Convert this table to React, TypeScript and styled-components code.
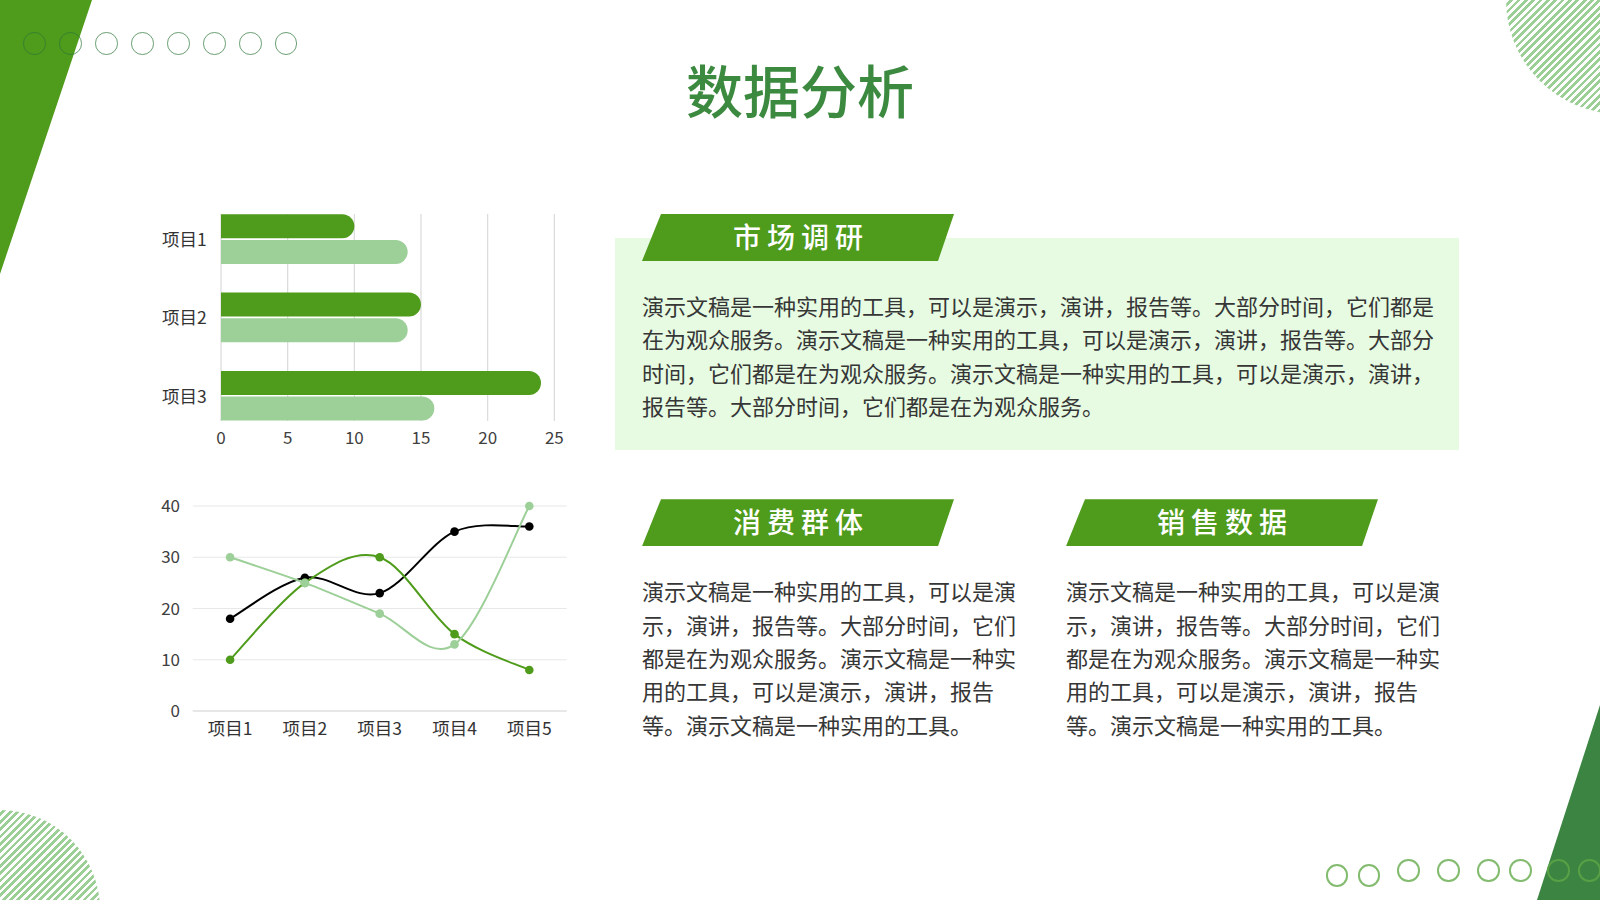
import React from "react";
import styled, { createGlobalStyle } from "styled-components";

const GREEN = "#4f9b1b";
const LIGHT = "#9dcf98";
const DEEP = "#3b8a3f";
const FONT = `"Noto Sans CJK SC", "Noto Sans", sans-serif`;

const GlobalStyle = createGlobalStyle`
  html, body {
    margin: 0;
    padding: 0;
    background: #fff;
  }
  body {
    font-family: ${FONT};
  }
`;

const Page = styled.div`
  position: relative;
  width: 1600px;
  height: 900px;
  overflow: hidden;
  background: #fff;
  display: flex;
  flex-direction: column;
`;

/* ---------- decorations ---------- */

const CornerWedge = styled.div<{ $side: "left" | "right" }>`
  position: absolute;
  ${(p) =>
    p.$side === "left"
      ? `left: 0; top: 0; width: 92px; height: 274px; background: ${GREEN};
         clip-path: polygon(0 0, 100% 0, 0 100%);`
      : `right: 0; bottom: 0; width: 63px; height: 195px; background: #3b8441;
         clip-path: polygon(100% 0, 100% 100%, 0 100%);`}
`;

const StripedDisc = styled.div<{ $x: number; $y: number; $size: number }>`
  position: absolute;
  left: ${(p) => p.$x}px;
  top: ${(p) => p.$y}px;
  width: ${(p) => p.$size}px;
  height: ${(p) => p.$size}px;
  border-radius: 50%;
  background: repeating-linear-gradient(
    135deg,
    #9ccf96 0px,
    #9ccf96 2.7px,
    transparent 2.7px,
    transparent 5.2px
  );
`;

const DotRow = styled.div`
  position: absolute;
  left: 23px;
  top: 32px;
  display: flex;
  gap: 13.4px;
`;

const Ring = styled.span<{ $tone: "grey" | "lime" }>`
  display: block;
  box-sizing: border-box;
  width: 22.6px;
  height: 22.6px;
  border-radius: 50%;
  border: ${(p) =>
    p.$tone === "grey" ? "1.5px solid rgba(44, 118, 55, 0.7)" : "2px solid rgba(96, 168, 70, 0.78)"};
`;

const FreeRing = styled(Ring)`
  position: absolute;
`;

/* ---------- layout ---------- */

const Title = styled.h1`
  margin: 60px 0 0;
  font-size: 57px;
  line-height: 57px;
  font-weight: 500;
  color: ${DEEP};
  text-align: center;
`;

const Content = styled.div`
  margin-top: 83px;
  padding-left: 140px;
  display: flex;
  gap: 35px;
`;

const ChartColumn = styled.div`
  width: 440px;
  display: flex;
  flex-direction: column;
  gap: 30px;
`;

const ChartSvg = styled.svg`
  display: block;
  font-family: ${FONT};
  overflow: visible;
`;

const TextColumn = styled.div`
  display: flex;
  flex-direction: column;
`;

const FeatureBox = styled.div`
  margin-top: 38px;
  width: 844px;
  box-sizing: border-box;
  padding: 0 16px 27px 27px;
  background: #e7fbe3;
`;

const Tag = styled.div<{ $lift?: boolean }>`
  margin-top: ${(p) => (p.$lift ? "-24px" : "0")};
  width: 312px;
  height: 47px;
  background: ${GREEN};
  clip-path: polygon(19px 0, 100% 0, calc(100% - 16px) 100%, 0 100%);
  display: flex;
  align-items: center;
  justify-content: center;
  padding: 0 0 4px 6px;
  box-sizing: border-box;
  color: #fff;
  font-size: 28px;
  font-weight: 500;
  letter-spacing: 6px;
`;

const Body = styled.p`
  margin: 28px 0 0;
  font-size: 22px;
  line-height: 33.4px;
  color: #363636;
`;

const CardRow = styled.div`
  margin-top: 49.5px;
  padding-left: 27px;
  display: flex;
  gap: 44px;
`;

const Card = styled.div`
  width: 380px;
`;

/* ---------- charts ---------- */

const barData = [
  { name: "项目1", a: 10, b: 14 },
  { name: "项目2", a: 15, b: 14 },
  { name: "项目3", a: 24, b: 16 },
];

const barPath = (x0: number, x1: number, y: number, h: number) => {
  const r = h / 2;
  return `M ${x0} ${y} H ${x1 - r} A ${r} ${r} 0 0 1 ${x1 - r} ${y + h} H ${x0} Z`;
};

const BarChart: React.FC = () => {
  const x0 = 81;
  const unit = 13.333;
  return (
    <ChartSvg width={440} height={250} viewBox="0 0 440 250">
      {[0, 5, 10, 15, 20, 25].map((v) => (
        <g key={v}>
          <line x1={x0 + v * unit} x2={x0 + v * unit} y1={14} y2={221} stroke="#dadada" strokeWidth={1.2} />
          <text x={x0 + v * unit} y={239} textAnchor="middle" dominantBaseline="middle" fontSize={17} fill="#404040">
            {v}
          </text>
        </g>
      ))}
      {barData.map((d, i) => {
        const top = 14.3 + 78.3 * i;
        return (
          <g key={d.name}>
            <path d={barPath(x0, x0 + d.a * unit, top, 24)} fill={GREEN} />
            <path d={barPath(x0, x0 + d.b * unit, top + 25.7, 24)} fill={LIGHT} />
            <text x={66.7} y={top + 27} textAnchor="end" dominantBaseline="middle" fontSize={17.5} fill="#333">
              {d.name}
            </text>
          </g>
        );
      })}
    </ChartSvg>
  );
};

const lineSeries = [
  { color: "#000", values: [18, 26, 23, 35, 36] },
  { color: GREEN, values: [10, 25, 30, 15, 8] },
  { color: LIGHT, values: [30, 25, 19, 13, 40] },
];

const smoothPath = (pts: [number, number][]) => {
  let d = `M ${pts[0][0]} ${pts[0][1]}`;
  const t = 1 / 6;
  for (let i = 0; i < pts.length - 1; i++) {
    const p0 = pts[i - 1] || pts[i];
    const p1 = pts[i];
    const p2 = pts[i + 1];
    const p3 = pts[i + 2] || p2;
    const c1x = p1[0] + (p2[0] - p0[0]) * t;
    const c1y = p1[1] + (p2[1] - p0[1]) * t;
    const c2x = p2[0] - (p3[0] - p1[0]) * t;
    const c2y = p2[1] - (p3[1] - p1[1]) * t;
    d += ` C ${c1x} ${c1y} ${c2x} ${c2y} ${p2[0]} ${p2[1]}`;
  }
  return d;
};

const LineChart: React.FC = () => {
  const left = 52.7;
  const right = 426.7;
  const step = (right - left) / 5;
  const xAt = (i: number) => left + step * (i + 0.5);
  const yAt = (v: number) => 231 - 5.125 * v;
  return (
    <ChartSvg width={440} height={260} viewBox="0 0 440 260">
      {[0, 10, 20, 30, 40].map((v) => (
        <g key={v}>
          <line
            x1={left}
            x2={right}
            y1={yAt(v)}
            y2={yAt(v)}
            stroke={v === 0 ? "#cfcfcf" : "#e8e8e8"}
            strokeWidth={1.2}
          />
          <text x={40} y={yAt(v) + 1.5} textAnchor="end" dominantBaseline="middle" fontSize={17} fill="#404040">
            {v}
          </text>
        </g>
      ))}
      {["项目1", "项目2", "项目3", "项目4", "项目5"].map((n, i) => (
        <text key={n} x={xAt(i)} y={250.5} textAnchor="middle" dominantBaseline="middle" fontSize={17.5} fill="#333">
          {n}
        </text>
      ))}
      {lineSeries.map((s) => {
        const pts = s.values.map((v, i) => [xAt(i), yAt(v)] as [number, number]);
        return (
          <g key={s.color}>
            <path d={smoothPath(pts)} fill="none" stroke={s.color} strokeWidth={2} />
            {pts.map(([x, y], i) => (
              <circle key={i} cx={x} cy={y} r={4.3} fill={s.color} />
            ))}
          </g>
        );
      })}
    </ChartSvg>
  );
};

/* ---------- text ---------- */

const longText =
  "演示文稿是一种实用的工具，可以是演示，演讲，报告等。大部分时间，它们都是在为观众服务。演示文稿是一种实用的工具，可以是演示，演讲，报告等。大部分时间，它们都是在为观众服务。演示文稿是一种实用的工具，可以是演示，演讲，报告等。大部分时间，它们都是在为观众服务。";

const shortText =
  "演示文稿是一种实用的工具，可以是演示，演讲，报告等。大部分时间，它们都是在为观众服务。演示文稿是一种实用的工具，可以是演示，演讲，报告等。演示文稿是一种实用的工具。";

const bottomRings = [
  { x: 1325.5, y: 864 },
  { x: 1357.5, y: 864 },
  { x: 1397, y: 859 },
  { x: 1437, y: 859 },
  { x: 1477, y: 859 },
  { x: 1509, y: 859 },
  { x: 1547, y: 859 },
  { x: 1578, y: 859 },
];

const App: React.FC = () => {
  return (
    <>
      <GlobalStyle />
      <Page>
        <CornerWedge $side="left" />
        <CornerWedge $side="right" />
        <StripedDisc $x={1506} $y={-114} $size={228} />
        <StripedDisc $x={-100} $y={810} $size={200} />
        <DotRow>
          {Array.from({ length: 8 }).map((_, i) => (
            <Ring key={i} $tone="grey" />
          ))}
        </DotRow>
        {bottomRings.map((r, i) => (
          <FreeRing key={i} $tone="lime" style={{ left: r.x, top: r.y }} />
        ))}

        <Title>数据分析</Title>

        <Content>
          <ChartColumn>
            <BarChart />
            <LineChart />
          </ChartColumn>

          <TextColumn>
            <FeatureBox>
              <Tag $lift>市场调研</Tag>
              <Body>{longText}</Body>
            </FeatureBox>

            <CardRow>
              <Card>
                <Tag>消费群体</Tag>
                <Body>{shortText}</Body>
              </Card>
              <Card>
                <Tag>销售数据</Tag>
                <Body>{shortText}</Body>
              </Card>
            </CardRow>
          </TextColumn>
        </Content>
      </Page>
    </>
  );
};

export default App;
